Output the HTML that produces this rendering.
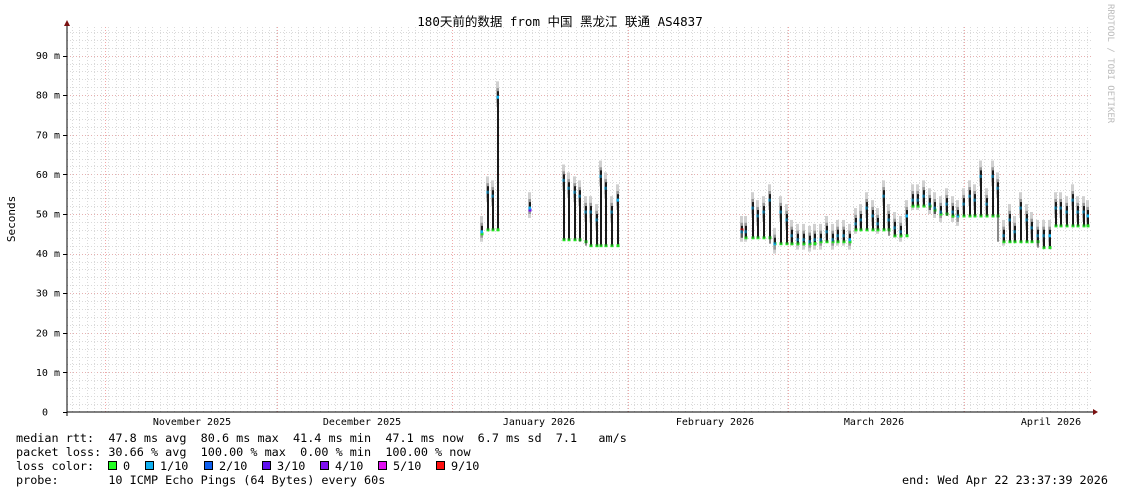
<!DOCTYPE html>
<html><head><meta charset="utf-8">
<style>
html,body{margin:0;padding:0;background:#fff;}
body{width:1121px;height:494px;overflow:hidden;position:relative;}
svg{position:absolute;left:0;top:0;}
.t{font-family:"DejaVu Sans Mono","Liberation Mono",monospace;}
.pre text{white-space:pre;}
</style></head><body>
<svg id="g" width="1121" height="494" xmlns="http://www.w3.org/2000/svg">
<rect width="1121" height="494" fill="#fff"/>
<g id="grid"></g>
<g id="data"></g>
<line x1="67" y1="412" x2="1094" y2="412" stroke="#000" stroke-width="1"/>
<line x1="67" y1="25" x2="67" y2="416" stroke="#000" stroke-width="1"/>
<polygon points="64,26 70,26 67,20" fill="#7a1010"/>
<polygon points="1093,409 1093,415 1098,412" fill="#7a1010"/>
<text class="t" x="560" y="26" font-size="12.5" text-anchor="middle" style="font-family:'DejaVu Sans Mono','Noto Sans CJK SC',monospace">180天前的数据 from 中国 黑龙江 联通 AS4837</text>
<text class="t" x="0" y="0" font-size="11" transform="translate(15,219) rotate(-90)" text-anchor="middle">Seconds</text>
<text class="t" x="0" y="0" font-size="9" fill="#bbb" transform="translate(1108,4) rotate(90)">RRDTOOL / TOBI OETIKER</text>
<g id="ylab" class="t" font-size="10" text-anchor="end"></g>
<g class="t" font-size="10" text-anchor="middle">
<text x="192" y="425">November 2025</text>
<text x="362" y="425">December 2025</text>
<text x="539" y="425">January 2026</text>
<text x="715" y="425">February 2026</text>
<text x="874" y="425">March 2026</text>
<text x="1051" y="425">April 2026</text>
</g>
<g class="t pre" font-size="11.8">
<text x="16" y="442">median rtt:  47.8 ms avg  80.6 ms max  41.4 ms min  47.1 ms now  6.7 ms sd  7.1   am/s</text>
<text x="16" y="456">packet loss: 30.66 % avg  100.00 % max  0.00 % min  100.00 % now</text>
<text x="16" y="470">loss color:</text>
<text x="16" y="484">probe:       10 ICMP Echo Pings (64 Bytes) every 60s</text>
<text x="902" y="484">end: Wed Apr 22 23:37:39 2026</text>
</g>
<g id="leg" class="t" font-size="11.8"></g>
</svg>
<script>
var NS="http://www.w3.org/2000/svg";
function el(p,n,a,t){var e=document.createElementNS(NS,n);for(var k in a)e.setAttribute(k,a[k]);if(t!=null)e.textContent=t;document.getElementById(p).appendChild(e);return e;}
function Y(v){return 412-v*3.96;}
for(var v=2;v<=96;v+=2){var y=Math.round(Y(v))+0.5;var maj=(v%10==0);
 el("grid","line",{x1:67,x2:1093,y1:y,y2:y,stroke:maj?"#e6b0b0":"#dadada","stroke-dasharray":"1,2","stroke-width":1});}
for(var x=72;x<1093;x+=7.3){var xx=Math.round(x)+0.5;el("grid","line",{x1:xx,x2:xx,y1:27,y2:412,stroke:"#dadada","stroke-dasharray":"1,2"});}
[105,277,452,628,788,964].forEach(function(x){el("grid","line",{x1:x+0.5,x2:x+0.5,y1:27,y2:412,stroke:"#f0a8a8","stroke-dasharray":"1,2"});});
for(var v=0;v<=90;v+=10){el("ylab","text",{x:v==0?48:60,y:Y(v)+3.5},v==0?"0":v+" m");
 el("grid","line",{x1:63,x2:67,y1:Math.round(Y(v))+0.5,y2:Math.round(Y(v))+0.5,stroke:"#000"});}
var G="#22e022",B="#10b0f0";
var d=[[481,45,47],[487,46,57],[492,46,56],[497,46,81],
[529,51,53,"#7010f0"],
[563,43.5,60],[568,43.5,58],[574,43.5,57],[579,43.5,56],[585,43,52],[590,42,52],[596,42,50],[600,42,61],[605,42,58],[611,42,52],[617,42,55],
[741,46,47,"#f01010"],[745,44,47],[752,44,53],[757,44,51],[763,44,52],[769,44,55],[774,42.5,44],[780,42.5,52],[786,42.5,50],[791,42.5,46],[797,42.5,45],[803,42.5,45],[809,42.5,44.5],[814,42.5,45],[820,43,45],[826,43,47],[832,43,45],[837,43,46],[843,43,46],[849,43,45],
[855,46,49],[860,46,50],[866,46,53],[872,46,51],[877,46,49],[883,46,56],[888,46,50],[894,44.5,48],[900,44.5,47],[906,44.5,51],[912,52,55],[917,52,55],[923,52,56],[929,52,54],[934,51,53],[940,50,52],[946,50,54],[952,49.5,52],[957,49.5,51],[963,49.5,54],[969,49.5,56],[974,49.5,55],[980,49.5,61],[986,49.5,54],[992,49.5,61],[997,49.5,58],
[1003,43,46],[1009,43,50],[1014,43,47],[1020,43,53],[1026,43,50],[1031,43,48],[1037,43,46],[1043,41.5,46],[1049,41.5,46],[1055,47,53],[1060,47,53],[1066,47,52],[1072,47,55],[1077,47,52],[1083,47,52],[1087,47,51]];
var prev=null;
d.forEach(function(p){var x=p[0],lo=p[1],hi=p[2];
 el("data","rect",{x:x-1,y:Y(hi+2.5),width:3,height:Y(hi-4)-Y(hi+2.5),fill:"#d0d0d0"});
 el("data","rect",{x:x-0.5,y:Y(hi+0.8),width:2.5,height:Y(hi-3)-Y(hi+0.8),fill:"#999"});
 el("data","rect",{x:x,y:Y(hi),width:2,height:Y(lo)-Y(hi),fill:"#1a1a1a"});
 if(prev&&x-prev[0]<8){el("data","rect",{x:prev[0]+0.5,y:Y(prev[2]),width:1,height:Y(lo)-Y(prev[2]),fill:"#1a1a1a"});}
 el("data","rect",{x:x-0.5,y:Y(lo)-1.5,width:3,height:3,fill:p[3]||G});
 el("data","rect",{x:x-0.5,y:Y(hi-1.5)-1.5,width:2.5,height:3,fill:B});
 prev=p;});
var lc=[["#22ff22","0",108],["#10b0f0","1/10",145],["#1060f0","2/10",204],["#6010f0","3/10",262],["#8010f0","4/10",320],["#e010f0","5/10",378],["#ff1010","9/10",436]];
lc.forEach(function(c){el("leg","rect",{x:c[2]+0.5,y:461.5,width:8,height:8,fill:c[0],stroke:"#000"});el("leg","text",{x:c[2]+15,y:470},c[1]);});
</script>
</body></html>
